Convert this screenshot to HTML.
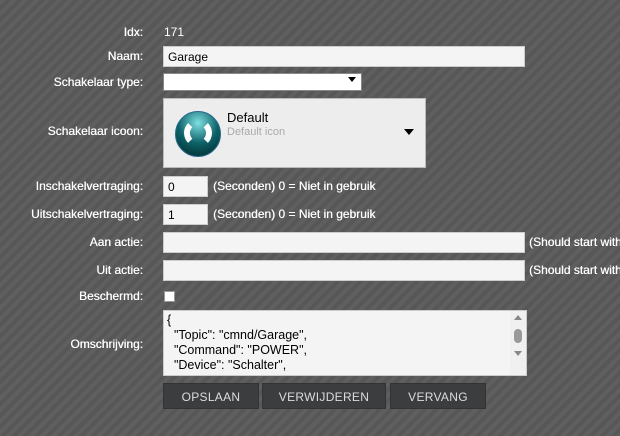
<html><head><style>
body{margin:0;width:620px;height:436px;overflow:hidden;background:#5b5b5b repeating-linear-gradient(135deg,#5f5f5f 0 4px,#575757 4px 8px);font-family:"Liberation Sans",sans-serif;font-size:12px;color:#fff;position:relative}
.l{position:absolute;right:477px;white-space:nowrap;text-shadow:0.3px 0 0 #fff}
.a{position:absolute}
.in{position:absolute;background:#f4f4f4;border:1px solid #ccc;box-sizing:border-box;color:#000;font-size:12px;padding:3px 4px}
.t{position:absolute;white-space:nowrap;text-shadow:0.3px 0 0 #fff}
.b{position:absolute;top:383px;height:26px;background:#3c3d3f;color:#ddd;font-size:12px;text-align:center;line-height:26px;border:1px solid #333;box-sizing:border-box;letter-spacing:0.3px}
</style></head><body>
<div class="l" style="top:25px">Idx:</div><div class="a" style="left:164px;top:25px">171</div>
<div class="l" style="top:49px">Naam:</div><div class="in" style="left:163px;top:46px;width:362px;height:21px">Garage</div>
<div class="l" style="top:75px">Schakelaar type:</div>
<div class="in" style="left:163px;top:73px;width:199px;height:18px;background:#fff;border-color:#888"><span style="position:absolute;right:5px;top:3px;border:4px solid transparent;border-top:5px solid #000"></span></div>
<div class="l" style="top:124px">Schakelaar icoon:</div>
<div class="in" style="left:163px;top:98px;width:263px;height:70px;background:#ededed;border-color:#bbb">
<div style="position:absolute;left:11px;top:12px;width:44px;height:44px;border-radius:50%;background:radial-gradient(circle at 50% 25%,#7fe0e2,#0d6369 50%,#022 100%);border:1px solid #2a6a90"></div>
<div style="position:absolute;left:20px;top:20px;width:28px;height:28px;border:6px solid #fff;border-top-color:transparent;border-bottom-color:transparent;border-radius:50%;box-sizing:border-box"></div>
<div style="position:absolute;left:63px;top:11px;font-size:13px">Default</div>
<div style="position:absolute;left:63px;top:27px;font-size:11px;color:#aaa">Default icon</div>
<div style="position:absolute;left:240px;top:30px;border:5px solid transparent;border-top:6px solid #000"></div></div>
<div class="l" style="top:179px">Inschakelvertraging:</div><div class="in" style="left:163px;top:176px;width:45px;height:21px">0</div><div class="t" style="left:213px;top:179px">(Seconden) 0 = Niet in gebruik</div>
<div class="l" style="top:207px">Uitschakelvertraging:</div><div class="in" style="left:163px;top:204px;width:45px;height:21px">1</div><div class="t" style="left:213px;top:207px">(Seconden) 0 = Niet in gebruik</div>
<div class="l" style="top:235px">Aan actie:</div><div class="in" style="left:163px;top:232px;width:362px;height:21px"></div><div class="t" style="left:529px;top:235px">(Should start with</div>
<div class="l" style="top:263px">Uit actie:</div><div class="in" style="left:163px;top:260px;width:362px;height:21px"></div><div class="t" style="left:529px;top:263px">(Should start with</div>
<div class="l" style="top:289px">Beschermd:</div><div class="a" style="left:164px;top:291px;width:11px;height:11px;background:#fff;border:1px solid #999;box-sizing:border-box"></div>
<div class="l" style="top:337px">Omschrijving:</div>
<div class="in" style="left:163px;top:310px;width:364px;height:66px;overflow:hidden;line-height:15px;padding:2px 3px;font-size:12.5px;white-space:pre">{
  "Topic": "cmnd/Garage",
  "Command": "POWER",
  "Device": "Schalter",
  "<div style="position:absolute;right:0;top:0;width:16px;height:64px;background:#f0f0f0"><div style="position:absolute;left:4px;top:4px;border:4px solid transparent;border-bottom:5px solid #888;border-top:0"></div><div style="position:absolute;left:4px;top:18px;width:8px;height:14px;border-radius:4px;background:#999"></div><div style="position:absolute;left:4px;top:40px;border:4px solid transparent;border-top:5px solid #888;border-bottom:0"></div></div></div>
<div class="b" style="left:163px;width:96px">OPSLAAN</div>
<div class="b" style="left:262px;width:124px">VERWIJDEREN</div>
<div class="b" style="left:390px;width:96px">VERVANG</div>
</body></html>
